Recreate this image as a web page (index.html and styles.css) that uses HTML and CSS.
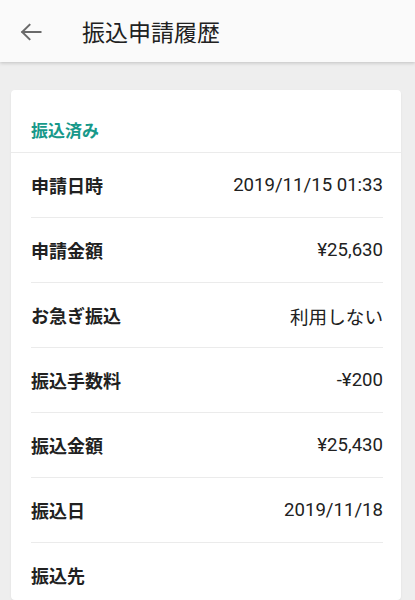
FILE: index.html
```html
<!DOCTYPE html>
<html lang="ja">
<head>
<meta charset="utf-8">
<title>振込申請履歴</title>
<link rel="stylesheet" href="styles.css">
</head>
<body>
<header class="appbar">
  <span class="back">
    <svg width="22" height="18" viewBox="0 0 22 18" aria-hidden="true">
      <path d="M20.5 9H2.2M9.5 1.8L2.2 9l7.3 7.2" fill="none" stroke="#6a6a6a" stroke-width="2" stroke-linecap="square"/>
    </svg>
  </span>
  <h1 class="title">振込申請履歴</h1>
</header>
<main class="content">
  <section class="card">
    <div class="status">振込済み</div>
    <div class="rows">
      <div class="row"><span class="label">申請日時</span><span class="value">2019/11/15 01:33</span></div>
      <div class="row"><span class="label">申請金額</span><span class="value">¥25,630</span></div>
      <div class="row"><span class="label">お急ぎ振込</span><span class="value">利用しない</span></div>
      <div class="row"><span class="label">振込手数料</span><span class="value">-¥200</span></div>
      <div class="row"><span class="label">振込金額</span><span class="value">¥25,430</span></div>
      <div class="row"><span class="label">振込日</span><span class="value">2019/11/18</span></div>
      <div class="row"><span class="label">振込先</span><span class="value"></span></div>
    </div>
  </section>
</main>
</body>
</html>
```
FILE: styles.css
```css
html, body {
  margin: 0;
  padding: 0;
  height: 100%;
  overflow: hidden;
}
body {
  background: #eeeeee;
  font-family: Roboto, "Noto Sans CJK JP", sans-serif;
  color: #212121;
}
.appbar {
  height: 62px;
  background: #fafafa;
  display: flex;
  align-items: center;
  box-shadow: 0 1px 3px rgba(0,0,0,0.12), 0 2px 4px rgba(0,0,0,0.06);
  position: relative;
  z-index: 1;
}
.back {
  width: 22px;
  height: 18px;
  margin-left: 20px;
  margin-top: 2px;
  display: flex;
}
.title {
  margin: 0 0 0 40px;
  font-family: "Noto Sans CJK JP", sans-serif;
  font-weight: 400;
  font-size: 23px;
  color: #212121;
  line-height: 1;
}
.content {
  padding: 28px 14px 0 11px;
}
.card {
  background: #ffffff;
  border-radius: 4px;
  box-shadow: 0 1px 2px rgba(0,0,0,0.08);
  height: 510px;
  overflow: hidden;
}
.status {
  padding: 28px 20px 0 20px;
  height: 34px;
  line-height: 24px;
  font-family: "Noto Sans CJK JP", sans-serif;
  font-weight: 700;
  font-size: 17px;
  color: #17998a;
  border-bottom: 1px solid #ebebeb;
}
.rows {
  margin: 0 18px 0 20px;
}
.row {
  height: 64px;
  display: flex;
  align-items: center;
  justify-content: space-between;
  border-bottom: 1px solid #ebebeb;
}
.label {
  font-family: "Noto Sans CJK JP", sans-serif;
  font-weight: 700;
  font-size: 18px;
  color: #212121;
}
.value {
  font-family: Roboto, "Noto Sans CJK JP", sans-serif;
  font-weight: 400;
  font-size: 18.6px;
  color: #212121;
}
```
